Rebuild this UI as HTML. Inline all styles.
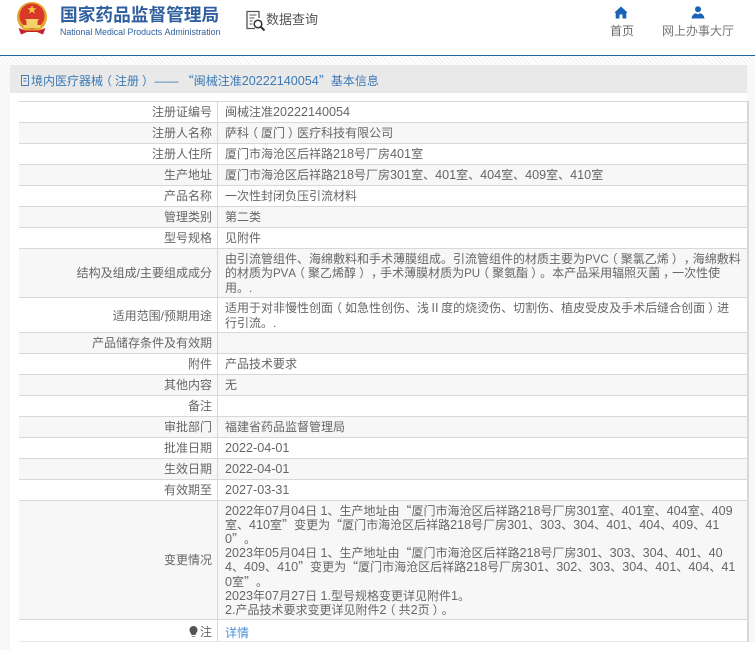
<!DOCTYPE html>
<html lang="zh"><head><meta charset="utf-8"><title>基本信息</title>
<style>
html,body{margin:0;padding:0;width:755px;height:650px;overflow:hidden;background:#fff;font-family:"Liberation Sans","Noto Sans CJK SC",sans-serif;color:#666;text-spacing-trim:space-all;font-kerning:none}
div,span,a{position:absolute;white-space:nowrap}
i{font-style:normal;font-size:12.6px;position:static}
i.t{font-size:11.5px}
em{font-style:normal;font-family:"Noto Sans CJK SC",sans-serif}
b{font-weight:normal;position:relative}
b.a{left:-3px}
b.z{left:3px}
.r{left:19px;width:728px;border-top:1px solid #d8d8d8;box-sizing:border-box}
.g{background:#f7f7f7}
.l{right:543px;font-size:12px;line-height:16px;color:#666}
.v{left:225px;font-size:12px;line-height:16px;color:#666}
</style></head><body>
<div style="left:0;top:55px;width:755px;height:1px;background:#1c659e"></div>
<div style="left:0;top:56px;width:755px;height:594px;background:#f8f8f8"></div>
<div style="left:0;top:56px;width:755px;height:9px;background:repeating-linear-gradient(45deg,#f0f0f0 0 1px,#fff 1px 3px)"></div>
<div style="left:10px;top:65px;width:737px;height:28px;background:#e9e9e9"></div>
<div style="left:10px;top:93px;width:737px;height:549px;background:#fff"></div>
<div style="left:10px;top:642px;width:745px;height:8px;background:#fff"></div>
<div style="left:747px;top:101px;width:2px;height:541px;background:#d8d8d8"></div>

<svg style="position:absolute;left:14px;top:0" width="38" height="37" viewBox="0 0 38 37">
<circle cx="18" cy="17" r="15" fill="#e3a52c"/>
<circle cx="18" cy="16" r="12.500" fill="#d8382a"/>
<path d="M18 5l1.200 3.300 3.300.1-2.600 2 1 3.200-2.900-1.900-2.900 1.900 1-3.200-2.600-2 3.300-.1z" fill="#f4c83e"/>
<path d="M9.500 25h17v3h-17zM12.500 20h11v5h-11zM11 19h14l-1.500 2h-11z" fill="#f3d36a"/>
<path d="M4.500 28l7 2.500h13l7-2.500-2.500 6.500-6-2.500h-10l-6 2.500z" fill="#c8202a"/>
</svg>
<div style="left:60px;top:3px;font-size:17.7px;line-height:24px;font-weight:700;color:#2f5f9e">国家药品监督管理局</div>
<div style="left:60px;top:26px;font-size:8.8px;line-height:12px;color:#2f5f9e">National Medical Products Administration</div>

<svg style="position:absolute;left:245px;top:10px" width="22" height="22" viewBox="0 0 22 22" fill="none" stroke="#555">
<path d="M10 18.500H2V1.500H14V8" stroke-width="1.300"/>
<path d="M4.500 5h7M4.500 8h5M4.500 11h3M4.500 14h3" stroke-width="1"/>
<circle cx="13" cy="14" r="3.800" stroke="#333" stroke-width="1.500"/>
<path d="M16 17l3.500 3.500" stroke="#333" stroke-width="2"/>
</svg>
<div style="left:266px;top:11px;font-size:13px;line-height:18px;color:#555">数据查询</div>

<svg style="position:absolute;left:614px;top:6px" width="14" height="13" viewBox="0 0 14 13"><path d="M7 .5L13.500 6.500 12.300 7V12.500H8.500V8.500H5.500V12.500H1.700V7L.5 6.500Z" fill="#1a62b8"/></svg>
<svg style="position:absolute;left:691px;top:6px" width="14" height="13" viewBox="0 0 14 13"><circle cx="7" cy="3.300" r="3" fill="#1a62b8"/><path d="M.5 12.500C1 9 3 7.500 5 7.200L7 8.500 9 7.200C11 7.500 13 9 13.500 12.500Z" fill="#1a62b8"/></svg>
<div style="left:610px;top:23px;font-size:12px;line-height:16px;color:#666">首页</div>
<div style="left:662px;top:23px;font-size:12px;line-height:16px;color:#777">网上办事大厅</div>

<svg style="position:absolute;left:20px;top:74px" width="10" height="13" viewBox="0 0 10 13" fill="none" stroke="#4a7fb5"><path d="M1.500 1.500H8.500V11.500H1.500ZM3.500 4.500H6.500M3.500 7H6.500" stroke-width="1"/></svg>
<div style="left:31px;top:73px;font-size:12px;line-height:16px;color:#3c7ab4">境内医疗器械<b class="a">（</b>注册<b class="z">）</b> —— <em>“</em>闽械注准<i>20222140054</i><em>”</em>基本信息</div>

<div class="r" style="top:101px;height:21px"></div>
<div class="r g" style="top:122px;height:21px"></div>
<div class="r" style="top:143px;height:21px"></div>
<div class="r g" style="top:164px;height:21px"></div>
<div class="r" style="top:185px;height:21px"></div>
<div class="r g" style="top:206px;height:21px"></div>
<div class="r" style="top:227px;height:21px"></div>
<div class="r g" style="top:248px;height:49px"></div>
<div class="r" style="top:297px;height:35px"></div>
<div class="r g" style="top:332px;height:21px"></div>
<div class="r" style="top:353px;height:21px"></div>
<div class="r g" style="top:374px;height:21px"></div>
<div class="r" style="top:395px;height:21px"></div>
<div class="r g" style="top:416px;height:21px"></div>
<div class="r" style="top:437px;height:21px"></div>
<div class="r g" style="top:458px;height:21px"></div>
<div class="r" style="top:479px;height:21px"></div>
<div class="r g" style="top:500px;height:119px"></div>
<div class="r" style="top:619px;height:23px;border-bottom:1px solid #e8e8e8"></div>
<div style="left:217px;top:101px;width:1px;height:541px;background:#d8d8d8"></div>

<div class="l" style="top:104px">注册证编号</div><div class="v" style="top:104px">闽械注准<i>20222140054</i></div>
<div class="l" style="top:125px">注册人名称</div><div class="v" style="top:125px">萨科<b class="a">（</b>厦门<b class="z">）</b>医疗科技有限公司</div>
<div class="l" style="top:146px">注册人住所</div><div class="v" style="top:146px">厦门市海沧区后祥路<i>218</i>号厂房<i>401</i>室</div>
<div class="l" style="top:167px">生产地址</div><div class="v" style="top:167px">厦门市海沧区后祥路<i>218</i>号厂房<i>301</i>室、<i>401</i>室、<i>404</i>室、<i>409</i>室、<i>410</i>室</div>
<div class="l" style="top:188px">产品名称</div><div class="v" style="top:188px">一次性封闭负压引流材料</div>
<div class="l" style="top:209px">管理类别</div><div class="v" style="top:209px">第二类</div>
<div class="l" style="top:230px">型号规格</div><div class="v" style="top:230px">见附件</div>
<div class="l" style="top:265px">结构及组成/主要组成成分</div>
<div class="v" style="top:251px">由引流管组件、海绵敷料和手术薄膜组成。引流管组件的材质主要为<i class="t">PVC</i><b class="a">（</b>聚氯乙烯<b class="z">）</b><b class="z">，</b>海绵敷料</div>
<div class="v" style="top:265px">的材质为<i class="t">PVA</i><b class="a">（</b>聚乙烯醇<b class="z">）</b><b class="z">，</b>手术薄膜材质为<i class="t">PU</i><b class="a">（</b>聚氨酯<b class="z">）</b>。本产品采用辐照灭菌<b class="z">，</b>一次性使</div>
<div class="v" style="top:280px">用。.</div>
<div class="l" style="top:308px">适用范围/预期用途</div>
<div class="v" style="top:300px">适用于对非慢性创面<b class="a">（</b>如急性创伤、浅<em>Ⅱ</em>度的烧烫伤、切割伤、植皮受皮及手术后缝合创面<b class="z">）</b>进</div>
<div class="v" style="top:315px">行引流。.</div>
<div class="l" style="top:335px">产品储存条件及有效期</div>
<div class="l" style="top:356px">附件</div><div class="v" style="top:356px">产品技术要求</div>
<div class="l" style="top:377px">其他内容</div><div class="v" style="top:377px">无</div>
<div class="l" style="top:398px">备注</div>
<div class="l" style="top:419px">审批部门</div><div class="v" style="top:419px">福建省药品监督管理局</div>
<div class="l" style="top:440px">批准日期</div><div class="v" style="top:440px"><i>2022-04-01</i></div>
<div class="l" style="top:461px">生效日期</div><div class="v" style="top:461px"><i>2022-04-01</i></div>
<div class="l" style="top:482px">有效期至</div><div class="v" style="top:482px"><i>2027-03-31</i></div>
<div class="l" style="top:552px">变更情况</div>
<div class="v" style="top:503px"><i>2022</i>年<i>07</i>月<i>04</i>日 <i>1</i>、生产地址由<em>“</em>厦门市海沧区后祥路<i>218</i>号厂房<i>301</i>室、<i>401</i>室、<i>404</i>室、<i>409</i></div>
<div class="v" style="top:517px">室、<i>410</i>室<em>”</em>变更为<em>“</em>厦门市海沧区后祥路<i>218</i>号厂房<i>301</i>、<i>303</i>、<i>304</i>、<i>401</i>、<i>404</i>、<i>409</i>、<i>41</i></div>
<div class="v" style="top:531px"><i>0</i><em>”</em>。</div>
<div class="v" style="top:545px"><i>2023</i>年<i>05</i>月<i>04</i>日 <i>1</i>、生产地址由<em>“</em>厦门市海沧区后祥路<i>218</i>号厂房<i>301</i>、<i>303</i>、<i>304</i>、<i>401</i>、<i>40</i></div>
<div class="v" style="top:559px"><i>4</i>、<i>409</i>、<i>410</i><em>”</em>变更为<em>“</em>厦门市海沧区后祥路<i>218</i>号厂房<i>301</i>、<i>302</i>、<i>303</i>、<i>304</i>、<i>401</i>、<i>404</i>、<i>41</i></div>
<div class="v" style="top:574px"><i>0</i>室<em>”</em>。</div>
<div class="v" style="top:588px"><i>2023</i>年<i>07</i>月<i>27</i>日 <i>1.</i>型号规格变更详见附件<i>1</i>。</div>
<div class="v" style="top:602px"><i>2.</i>产品技术要求变更详见附件<i>2</i><b class="a">（</b>共<i>2</i>页<b class="z">）</b>。</div>
<svg style="position:absolute;left:188px;top:625px" width="11" height="13" viewBox="0 0 11 13"><path d="M5.500 1C8 1 9.500 3 9.500 5C9.500 7 8 8 7.500 10H3.500C3 8 1.500 7 1.500 5C1.500 3 3 1 5.500 1Z" fill="#555"/><path d="M3.800 11H7.200V12H3.800Z" fill="#888"/></svg>
<div class="l" style="top:624px">注</div>
<a class="v" style="top:625px;color:#4a90d9;text-decoration:none">详情</a>
</body></html>
